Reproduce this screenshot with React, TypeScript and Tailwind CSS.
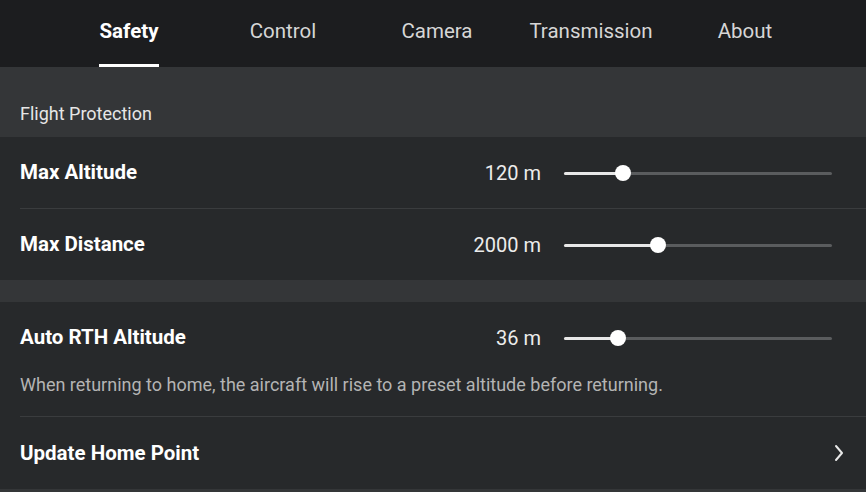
const tabs = ["Safety", "Control", "Camera", "Transmission", "About"];

const Slider = ({ pct }: { pct: number }) => (
  <div className="relative h-4 w-[268px]">
    <div className="absolute left-0 right-0 top-[7px] h-[3px] rounded-full bg-[#5a5c5e]" />
    <div
      className="absolute left-0 top-[7px] h-[3px] rounded-full bg-[#e8e8e8]"
      style={{ width: `${pct}%` }}
    />
    <div
      className="absolute top-0 h-4 w-4 -translate-x-1/2 rounded-full bg-white"
      style={{ left: `${pct}%` }}
    />
  </div>
);

const SliderRow = ({
  label,
  value,
  pct,
}: {
  label: string;
  value: string;
  pct: number;
}) => (
  <div className="flex h-[71px] items-center pl-5">
    <span className="flex-1 text-[20.5px] font-bold text-white">{label}</span>
    <span className="w-[120px] text-right text-[20px] text-[#ececec]">{value}</span>
    <div className="ml-[23px] mr-[34px]">
      <Slider pct={pct} />
    </div>
  </div>
);

export default function App() {
  return (
    <div
      className="h-[492px] w-[866px] overflow-hidden bg-[#343638]"
      style={{ fontFamily: "Roboto, 'Noto Sans', sans-serif" }}
    >
      <div className="flex h-[67px] bg-[#1c1d1f] pl-[52px]">
        {tabs.map((t, i) => (
          <div key={t} className="relative flex w-[154px] items-center justify-center pb-[4px]">
            <span
              className={
                i === 0
                  ? "text-[20.5px] font-bold text-white"
                  : "text-[20.5px] text-[#d6d6d6]"
              }
            >
              {t}
            </span>
            {i === 0 && (
              <div className="absolute bottom-0 h-[3px] w-[60px] bg-white" />
            )}
          </div>
        ))}
      </div>

      <div className="flex h-[70px] items-end pb-[10px] pl-5 text-[18px] text-[#e6e6e6]">
        Flight Protection
      </div>

      <div className="bg-[#27292b]">
        <SliderRow label="Max Altitude" value="120 m" pct={22} />
        <div className="ml-5 h-px bg-[#3a3c3e]" />
        <SliderRow label="Max Distance" value="2000 m" pct={35} />
      </div>

      <div className="h-[22px]" />

      <div className="bg-[#27292b]">
        <SliderRow label="Auto RTH Altitude" value="36 m" pct={20} />
        <p className="pb-[19px] pl-5 text-[18px] leading-[24px] text-[#b4b4b4]">
          When returning to home, the aircraft will rise to a preset altitude before returning.
        </p>
        <div className="ml-5 h-px bg-[#3a3c3e]" />
        <div className="flex h-[72px] items-center pl-5 pr-[22px]">
          <span className="flex-1 text-[20.5px] font-bold text-white">Update Home Point</span>
          <svg width="10" height="18" viewBox="0 0 10 18" fill="none">
            <path d="M2 2l6 7-6 7" stroke="#e8e8e8" strokeWidth="2" strokeLinecap="round" strokeLinejoin="round" />
          </svg>
        </div>
      </div>
    </div>
  );
}
